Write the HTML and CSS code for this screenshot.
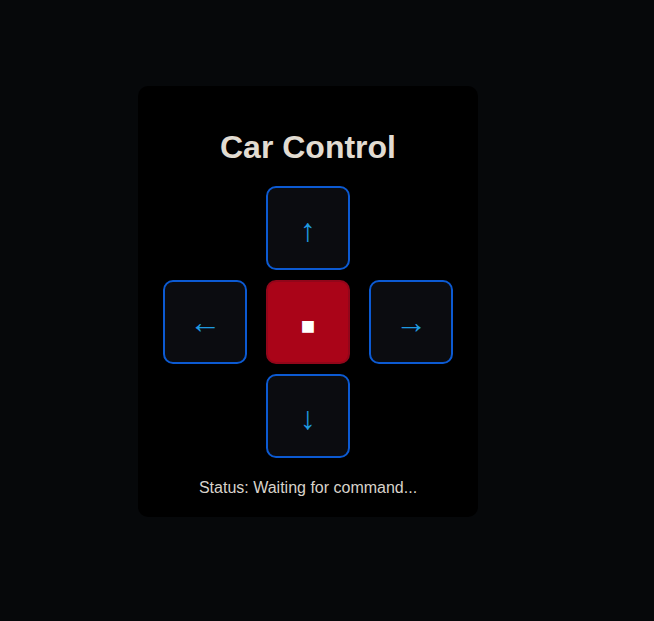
FILE: index.html
```html
<!DOCTYPE html>
<html>
<head>
<meta charset="utf-8">
<link rel="stylesheet" href="styles.css">
</head>
<body>
<div class="page">
  <div class="card">
    <h1 class="title">Car Control</h1>
    <div class="pad">
      <span></span>
      <button class="btn vert">↑</button>
      <span></span>
      <button class="btn">←</button>
      <button class="btn stop">■</button>
      <button class="btn">→</button>
      <span></span>
      <button class="btn vert">↓</button>
      <span></span>
    </div>
    <p class="status">Status: Waiting for command...</p>
  </div>
</div>
</body>
</html>
```
FILE: styles.css
```css
html, body {
  margin: 0;
  background: #06080a;
  font-family: "Liberation Sans", Arial, sans-serif;
}
.page {
  padding: 86px 0 0 138px;
}
.card {
  width: 340px;
  box-sizing: border-box;
  background: #000;
  border-radius: 10px;
  padding: 43px 20px 20px;
  display: flex;
  flex-direction: column;
  align-items: center;
}
.title {
  margin: 0 0 20px;
  font-size: 32px;
  font-weight: bold;
  color: #e2dcd2;
  line-height: normal;
}
.pad {
  display: grid;
  grid-template-columns: repeat(3, 84px);
  grid-template-rows: repeat(3, 84px);
  column-gap: 19px;
  row-gap: 10px;
}
.btn {
  width: 84px;
  height: 84px;
  box-sizing: border-box;
  border: 2px solid #0c5ad2;
  border-radius: 10px;
  background: #0b0c10;
  color: #1f9ae0;
  font-family: "Liberation Sans", Arial, sans-serif;
  font-size: 32px;
  padding: 0;
  display: flex;
  align-items: center;
  justify-content: center;
}
.vert {
  padding-top: 4px;
}
.stop {
  background: #aa0418;
  border-color: #92061a;
  color: #ffffff;
  font-size: 24px;
  padding-top: 8px;
}
.status {
  margin: 21px 0 0;
  font-size: 16px;
  color: #d8d3cb;
  line-height: normal;
}
```
